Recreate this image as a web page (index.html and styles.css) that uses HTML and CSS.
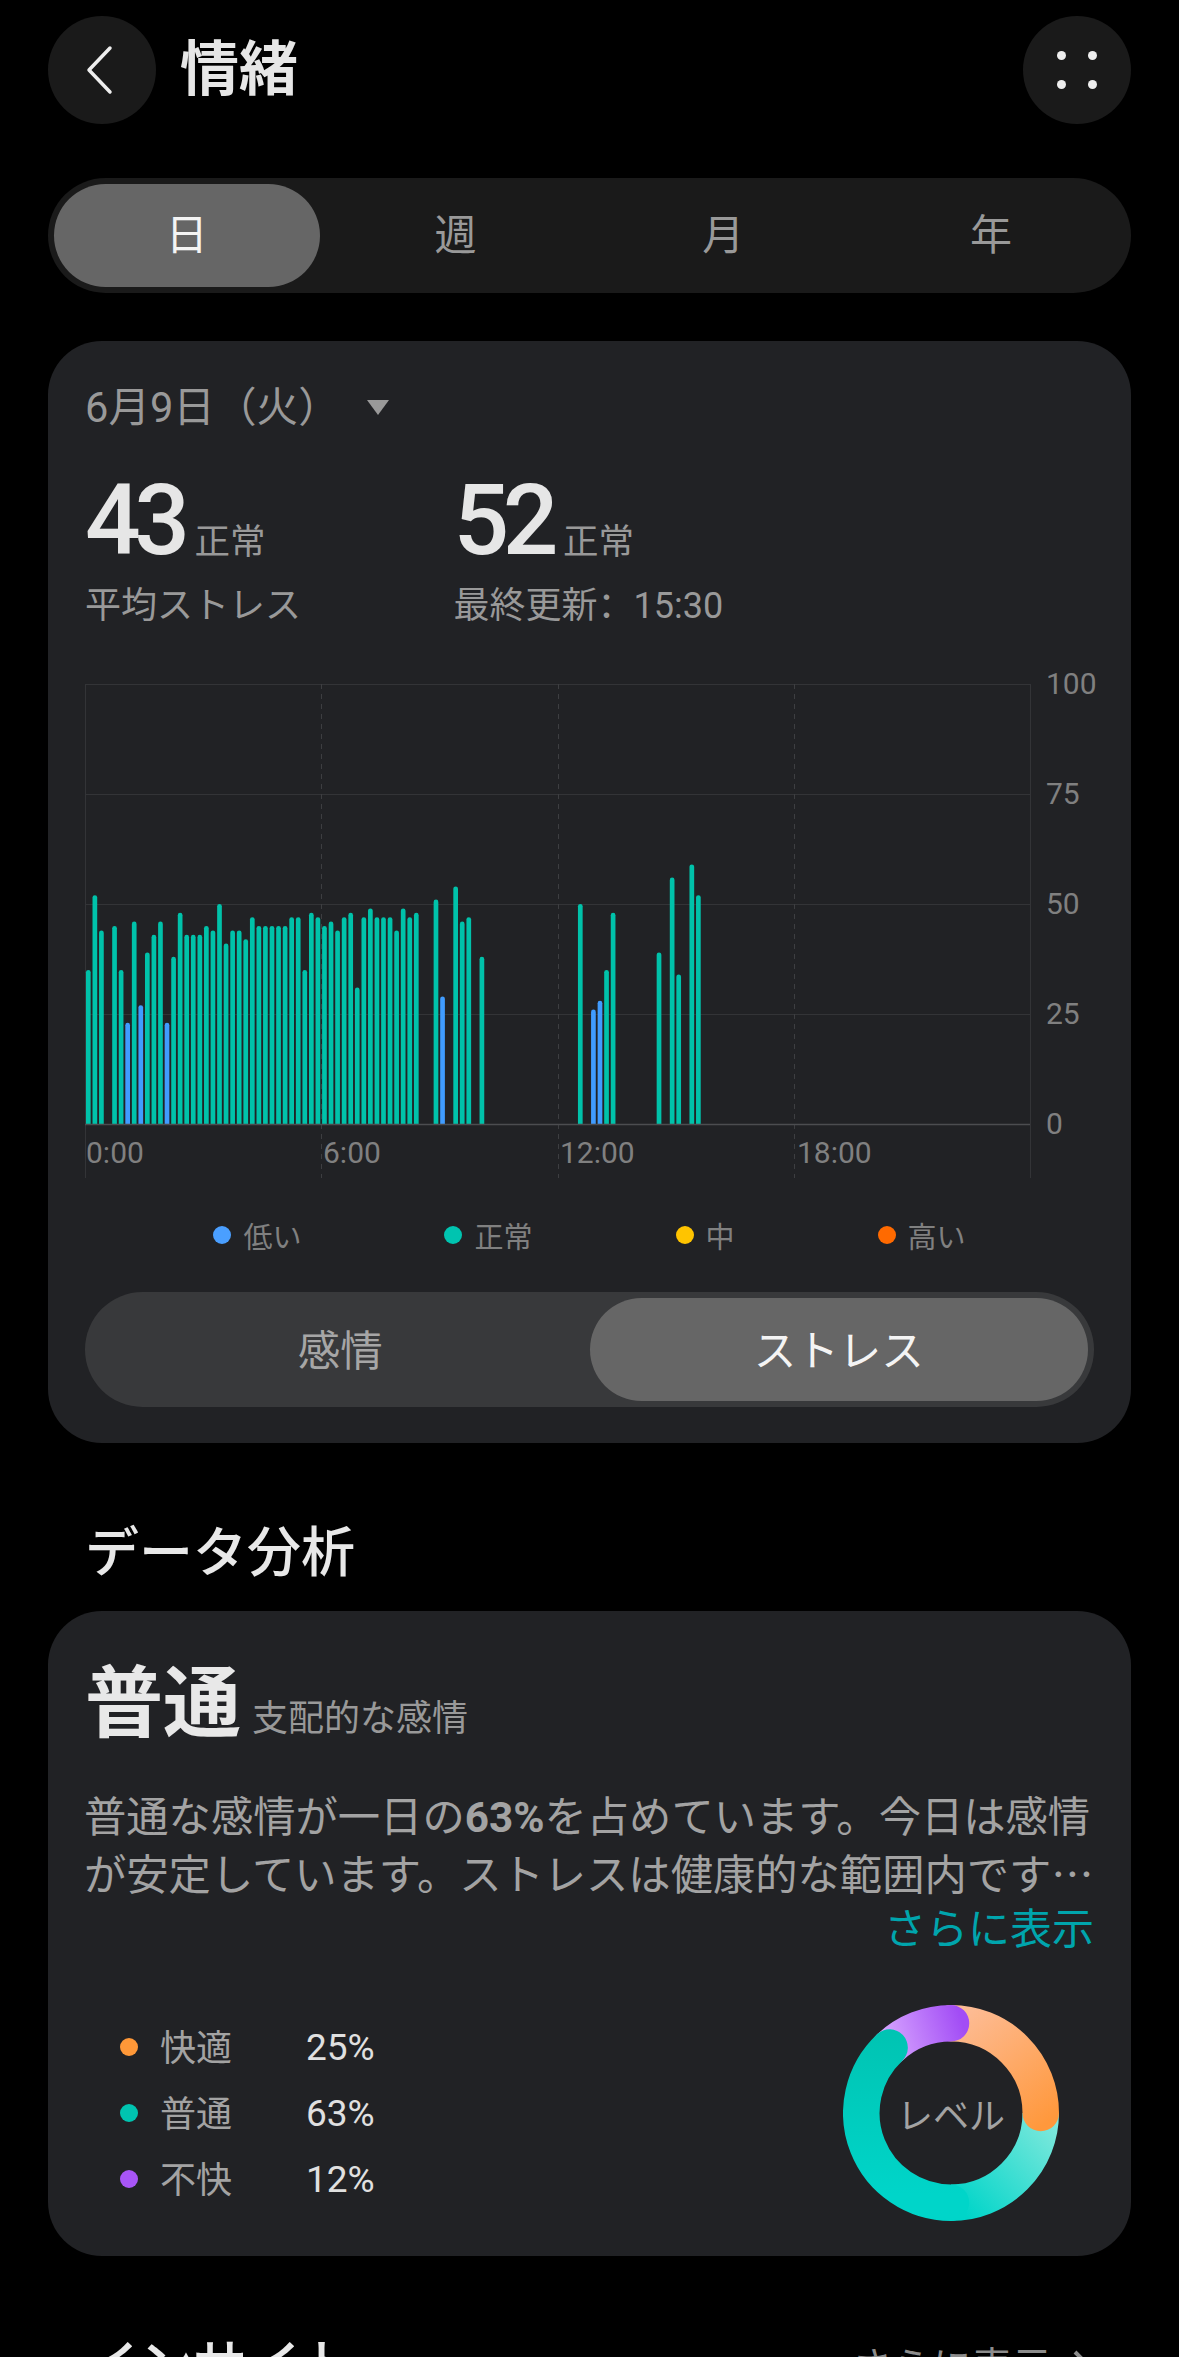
FILE: index.html
```html
<!DOCTYPE html>
<html lang="ja">
<head>
    <meta charset="UTF-8">
    <meta name="viewport" content="width=device-width, initial-scale=1.0">
    <title>情緒</title>
    <link rel="stylesheet" href="styles.css">
</head>
<body>
    <header class="top-bar">
        <div class="round-btn">
            <svg width="108" height="108" viewBox="0 0 108 108"><path d="M62 32 L41 54 L62 76" fill="none" stroke="#eee" stroke-width="3.5" stroke-linecap="round" stroke-linejoin="round"/></svg>
        </div>
        <h1 class="page-title">情緒</h1>
        <div class="round-btn menu-btn">
            <svg width="108" height="108" viewBox="0 0 108 108" fill="#eee"><circle cx="38.5" cy="39.5" r="4.5"/><circle cx="69.5" cy="39.5" r="4.5"/><circle cx="38.5" cy="68.5" r="4.5"/><circle cx="69.5" cy="68.5" r="4.5"/></svg>
        </div>
    </header>

    <nav class="tabs">
        <div class="tab active">日</div>
        <div class="tab">週</div>
        <div class="tab">月</div>
        <div class="tab">年</div>
    </nav>

    <section class="card stress-card">
        <div class="date-row">
            <span>6月9日（火）</span>
            <span class="date-arrow"></span>
        </div>
        <div class="stats">
            <div class="stat">
                <div class="stat-main"><span class="stat-num">43</span><span class="stat-level">正常</span></div>
                <div class="stat-label">平均ストレス</div>
            </div>
            <div class="stat">
                <div class="stat-main"><span class="stat-num">52</span><span class="stat-level">正常</span></div>
                <div class="stat-label">最終更新<span class="colon" lang="zh-Hans">：</span>15:30</div>
            </div>
        </div>

        <svg class="chart" id="chart" width="1014" height="520" viewBox="0 0 1014 520">
            <defs>
                <clipPath id="plot"><rect x="0" y="0" width="946" height="454"/></clipPath>
            </defs>
            <g class="grid">
                <line x1="0" y1="14.5" x2="945" y2="14.5"/>
                <line x1="0" y1="124.5" x2="945" y2="124.5"/>
                <line x1="0" y1="234.5" x2="945" y2="234.5"/>
                <line x1="0" y1="344.5" x2="945" y2="344.5"/>
                <line x1="0.5" y1="14" x2="0.5" y2="508"/>
                <line x1="945.5" y1="14" x2="945.5" y2="508"/>
                <line class="dash" x1="236.5" y1="14" x2="236.5" y2="508"/>
                <line class="dash" x1="473.5" y1="14" x2="473.5" y2="508"/>
                <line class="dash" x1="709.5" y1="14" x2="709.5" y2="508"/>
            </g>
            <g id="bars" clip-path="url(#plot)"></g>
            <line class="baseline" x1="0" y1="454.5" x2="945" y2="454.5"/>
            <g class="axis">
                <text x="961" y="24">100</text>
                <text x="961" y="134">75</text>
                <text x="961" y="244">50</text>
                <text x="961" y="354">25</text>
                <text x="961" y="464">0</text>
                <text x="1" y="493">0:00</text>
                <text x="238" y="493">6:00</text>
                <text x="475" y="493">12:00</text>
                <text x="712" y="493">18:00</text>
            </g>
        </svg>

        <div class="legend">
            <div class="legend-item"><span class="dot dot-low"></span>低い</div>
            <div class="legend-item"><span class="dot dot-normal"></span>正常</div>
            <div class="legend-item"><span class="dot dot-mid"></span>中</div>
            <div class="legend-item"><span class="dot dot-high"></span>高い</div>
        </div>

        <div class="toggle">
            <div class="toggle-item">感情</div>
            <div class="toggle-item active">ストレス</div>
        </div>
    </section>

    <h2 class="section-title">データ分析</h2>

    <section class="card analysis-card">
        <div class="mood-head">
            <span class="mood-name">普通</span>
            <span class="mood-sub">支配的な感情</span>
        </div>
        <p class="mood-text">普通な感情が一日の<b>63%</b>を占めています。今日は感情が安定しています。ストレスは健康的な範囲内です…</p>
        <div class="more-link">さらに表示</div>

        <div class="mood-bottom">
            <ul class="mood-list">
                <li><span class="dot dot-good"></span><span class="mood-label">快適</span><span class="mood-pct">25%</span></li>
                <li><span class="dot dot-normal"></span><span class="mood-label">普通</span><span class="mood-pct">63%</span></li>
                <li><span class="dot dot-bad"></span><span class="mood-label">不快</span><span class="mood-pct">12%</span></li>
            </ul>
            <div class="donut">
                <svg width="216" height="216" viewBox="0 0 216 216" fill="none" stroke-width="36.5">
                    <defs>
                        <linearGradient id="grad-teal" gradientUnits="userSpaceOnUse" x1="205" y1="100" x2="105" y2="190">
                            <stop offset="0" stop-color="#86e9dd"/>
                            <stop offset="1" stop-color="#00d5c9"/>
                        </linearGradient>
                        <linearGradient id="grad-teal-end" gradientUnits="userSpaceOnUse" x1="60" y1="190" x2="60" y2="30">
                            <stop offset="0" stop-color="#00d5c9"/>
                            <stop offset="1" stop-color="#00c4b3"/>
                        </linearGradient>
                        <linearGradient id="grad-orange" gradientUnits="userSpaceOnUse" x1="110" y1="15" x2="195" y2="125">
                            <stop offset="0" stop-color="#fdbc95"/>
                            <stop offset="1" stop-color="#ff983c"/>
                        </linearGradient>
                        <linearGradient id="grad-purple" gradientUnits="userSpaceOnUse" x1="45" y1="45" x2="120" y2="20">
                            <stop offset="0" stop-color="#d7a5ff"/>
                            <stop offset="1" stop-color="#a24df5"/>
                        </linearGradient>
                    </defs>
                    <path stroke="url(#grad-teal)" d="M197.75 108 A89.75 89.75 0 0 1 108 197.75"/>
                    <path stroke="url(#grad-orange)" stroke-linecap="round" d="M108 18.25 A89.75 89.75 0 0 1 197.75 108"/>
                    <path stroke="url(#grad-purple)" stroke-linecap="round" d="M46.6 42.6 A89.75 89.75 0 0 1 108 18.25"/>
                    <path stroke="url(#grad-teal-end)" stroke-linecap="round" d="M108 197.75 A89.75 89.75 0 0 1 46.6 42.6"/>
                </svg>
                <span class="donut-label">レベル</span>
            </div>
        </div>
    </section>

    <div class="section-row">
        <h2 class="section-title">インサイト</h2>
        <div class="see-more">さらに表示<svg width="22" height="40" viewBox="0 0 22 40"><path d="M3 4 L19 20 L3 36" fill="none" stroke="#8c8c8c" stroke-width="4"/></svg></div>
    </div>

    <script src="chart.js"></script>
</body>
</html>
```

FILE: styles.css
```css
html, body {
    height: 2357px;
    overflow: hidden;
}

body {
    margin: 0;
    padding: 16px 48px 0;
    box-sizing: border-box;
    background: #000;
    color: #e6e6e6;
    font-family: Roboto, "Noto Sans CJK JP", sans-serif;
}

.top-bar {
    display: flex;
    align-items: center;
    height: 108px;
}

.round-btn {
    width: 108px;
    height: 108px;
    border-radius: 50%;
    background: #1a1a1a;
}

.round-btn svg {
    display: block;
}

.menu-btn {
    margin-left: auto;
}

.page-title {
    margin: 0 0 0 24px;
    font-size: 59px;
    line-height: 108px;
    font-weight: 700;
    color: #e6e6e6;
}

.tabs {
    display: grid;
    grid-template-columns: repeat(4, 1fr);
    height: 103px;
    margin-top: 54px;
    padding: 6px;
    border-radius: 58px;
    background: #1a1a1a;
}

.tab {
    display: flex;
    align-items: center;
    justify-content: center;
    padding-bottom: 8px;
    box-sizing: border-box;
    font-size: 42px;
    color: #999;
    border-radius: 52px;
}

.tab.active {
    margin-right: 2px;
    background: #666;
    color: #f4f4f4;
}

.card {
    background: #212225;
    border-radius: 54px;
    padding: 36px 37px;
}

.stress-card {
    margin-top: 48px;
    height: 1030px;
    padding-bottom: 36px;
}

.date-row {
    display: flex;
    align-items: center;
    height: 54px;
    padding-bottom: 6px;
    font-size: 41.6px;
    color: #999;
}

.date-arrow {
    width: 0;
    height: 0;
    margin-left: 27px;
    margin-top: 6px;
    border-left: 11px solid transparent;
    border-right: 11px solid transparent;
    border-top: 15px solid #999;
}

.stats {
    display: flex;
    margin-top: 35px;
}

.stat {
    width: 368.5px;
}

.stat-main {
    display: flex;
    align-items: baseline;
    height: 98px;
    line-height: 98px;
}

.stat-num {
    font-size: 98px;
    font-weight: 500;
    letter-spacing: -6.5px;
    color: #e6e6e6;
}

.stat-level {
    margin-left: 11px;
    font-size: 35.5px;
    color: #999;
}

.stat-label {
    margin-top: 11px;
    font-size: 36px;
    line-height: 50px;
    color: #999;
}

.colon {
    font-family: "Noto Sans CJK SC", sans-serif;
    line-height: 0;
}

.chart {
    display: block;
    margin-top: 39px;
}

.grid line {
    stroke: #333437;
    stroke-width: 1;
}

.grid .dash {
    stroke: #3d3e41;
    stroke-dasharray: 5 5;
}

.baseline {
    stroke: #4c4d50;
    stroke-width: 1.5;
}

.axis text {
    font-size: 30px;
    fill: #808080;
}

.legend {
    display: flex;
    justify-content: center;
    gap: 143px;
    height: 40px;
    margin-top: 25px;
}

.legend-item {
    display: flex;
    align-items: center;
    gap: 12px;
    font-size: 29px;
    color: #808080;
}

.dot {
    flex: none;
    width: 18px;
    height: 18px;
    border-radius: 50%;
}

.dot-low { background: #4a9fff; }
.dot-normal { background: #00c4b0; }
.dot-mid { background: #ffc400; }
.dot-high { background: #ff6a00; }
.dot-good { background: #ff9838; }
.dot-bad { background: #a855f7; }

.toggle {
    display: grid;
    grid-template-columns: 1fr 1fr;
    height: 103px;
    margin-top: 37px;
    padding: 6px;
    border-radius: 58px;
    background: #38393b;
}

.toggle-item {
    display: flex;
    align-items: center;
    justify-content: center;
    padding-bottom: 4px;
    box-sizing: border-box;
    font-size: 42.5px;
    color: #a6a6a6;
    border-radius: 52px;
}

.toggle-item.active {
    background: #666;
    color: #f4f4f4;
}

.section-title {
    margin: 76px 0 22px;
    padding-left: 37px;
    font-size: 54px;
    line-height: 70px;
    font-weight: 500;
    color: #e8e8e8;
}

.analysis-card {
    height: 596px;
    padding-top: 49px;
    padding-bottom: 0;
}

.mood-head {
    display: flex;
    align-items: baseline;
    height: 90px;
    line-height: 90px;
}

.mood-name {
    font-size: 78px;
    font-weight: 700;
    color: #e8e8e8;
}

.mood-sub {
    margin-left: 11px;
    font-size: 36px;
    color: #999;
}

.mood-text {
    margin: 34.5px -10px 0 -1px;
    font-family: "Noto Sans CJK JP", sans-serif;
    font-size: 42.3px;
    line-height: 58px;
    color: #a3a3a3;
}

.mood-text b {
    font-family: Roboto, sans-serif;
    font-weight: 700;
    line-height: 0;
}

.more-link {
    margin-top: 3px;
    text-align: right;
    font-size: 42px;
    line-height: 52px;
    color: #00a5ad;
}

.mood-bottom {
    display: flex;
    align-items: center;
    justify-content: space-between;
    margin-top: 49.5px;
    padding: 0 35px;
}

.mood-list {
    list-style: none;
    margin: 0;
    padding: 0;
}

.mood-list li {
    display: flex;
    align-items: center;
    height: 66px;
}

.mood-label {
    width: 72px;
    margin-left: 22px;
    margin-top: -5px;
    font-size: 36px;
    color: #a3a3a3;
}

.mood-pct {
    margin-left: 74px;
    font-size: 37px;
    color: #e0e0e0;
}

.donut {
    position: relative;
    width: 216px;
    height: 216px;
}

.donut svg {
    display: block;
}

.donut-label {
    position: absolute;
    inset: 0;
    display: flex;
    align-items: center;
    justify-content: center;
    font-size: 36px;
    color: #a3a3a3;
}

.section-row {
    display: flex;
    justify-content: space-between;
    align-items: flex-start;
}

.see-more {
    display: flex;
    align-items: center;
    gap: 20px;
    margin-top: 82px;
    margin-right: 37px;
    font-size: 40px;
    line-height: 60px;
    color: #8c8c8c;
}
```

FILE: chart.js
```js
// 10 minute samples from 0:00, 0 means no reading
const values = [
    35, 52, 44, 0, 45, 35, 23, 46, 27, 39, 43, 46, 23, 38, 48, 43, 43, 43, 45, 44,
    50, 41, 44, 44, 42, 47, 45, 45, 45, 45, 45, 47, 47, 35, 48, 47, 45, 46, 44, 47,
    48, 31, 47, 49, 47, 47, 47, 44, 49, 47, 48, 0, 0, 51, 29, 0, 54, 46, 47, 0,
    38, 0, 0, 0, 0, 0, 0, 0, 0, 0, 0, 0, 0, 0, 0, 50, 0, 26, 28, 35,
    48, 0, 0, 0, 0, 0, 0, 39, 0, 56, 34, 0, 59, 52
];
const lowIndexes = [6, 8, 12, 54, 77, 78];

const barsGroup = document.getElementById("bars");

values.forEach((value, i) => {
    if (!value) return;
    const height = value * 4.4;
    const rect = document.createElementNS("http://www.w3.org/2000/svg", "rect");
    rect.setAttribute("x", 0.95 + i * 6.56);
    rect.setAttribute("y", 454 - height);
    rect.setAttribute("width", 4.7);
    rect.setAttribute("height", height + 4);
    rect.setAttribute("rx", 2.35);
    rect.setAttribute("fill", lowIndexes.includes(i) ? "#409cff" : "#00c2aa");
    barsGroup.appendChild(rect);
});
```
